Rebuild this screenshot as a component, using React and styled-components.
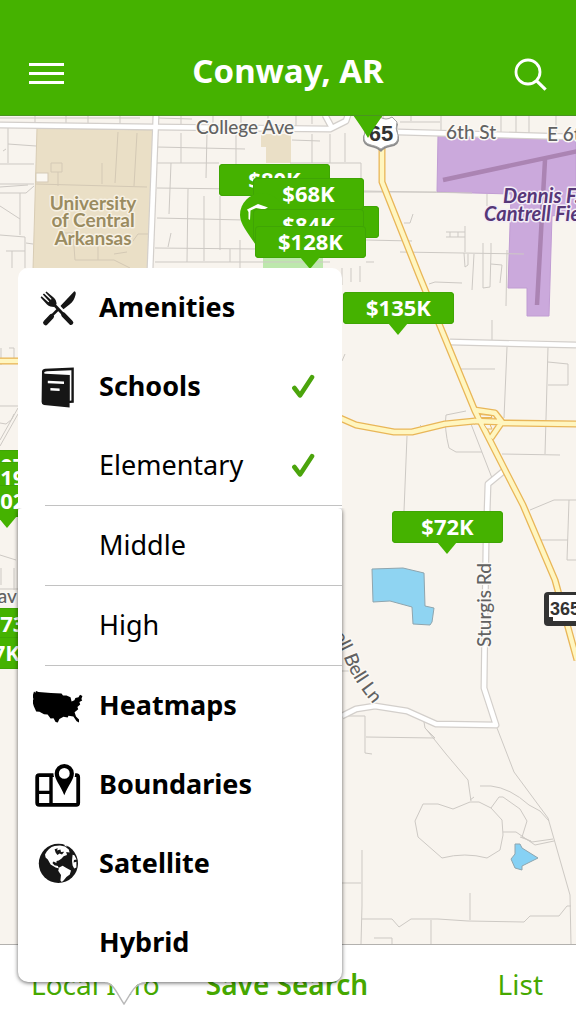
import React, { useState } from "react";
import styled, { createGlobalStyle, css } from "styled-components";

const GlobalStyle = createGlobalStyle`
  *, *::before, *::after { box-sizing: border-box; }
  body { margin: 0; background: #fff; font-family: "Noto Sans", "Open Sans", sans-serif; }
  button, input { font: inherit; }
`;

const green = "#45b200";

const Screen = styled.div`
  position: relative;
  display: flex;
  flex-direction: column;
  min-height: 100vh;
  overflow: hidden;
`;

const Header = styled.header`
  display: grid;
  grid-template-columns: 1fr auto 1fr;
  align-items: center;
  height: 116px;
  padding: 32px 29px 0;
  background: ${green};
  border-bottom: 1px solid #4a9420;
  color: #fff;
`;

const Title = styled.h1`
  margin: 0;
  padding-bottom: 6px;
  font-size: 33px;
  line-height: 40px;
  font-weight: 700;
`;

const IconButton = styled.button`
  display: flex;
  justify-self: ${(p) => p.$side};
  padding: 0;
  border: 0;
  background: none;
  color: inherit;
  cursor: pointer;
`;

const Bars = styled.span`
  display: grid;
  gap: 6px;
  width: 35px;
`;

const Bar = styled.span`
  height: 3px;
  background: #fff;
`;

const MapArea = styled.main`
  position: relative;
  flex: 1;
  min-height: 828px;
  overflow: hidden;
  background: #f8f4ee;
`;

const MapDrawing = styled.svg`
  display: block;
  position: absolute;
  inset: 0;
  width: 100%;
  height: 100%;
`;

const MapText = styled.text`
  font-family: Lato, sans-serif;
  font-size: ${(p) => p.$size || 19}px;
  font-weight: ${(p) => p.$weight || 500};
  font-style: ${(p) => (p.$italic ? "italic" : "normal")};
  fill: ${(p) => p.$color || "#626262"};
  stroke: ${(p) => p.$halo || "#fbf9f5"};
  stroke-width: 3px;
  stroke-linejoin: round;
  paint-order: stroke;
`;

const SignText = styled.text`
  font-family: "Liberation Sans Narrow", "Liberation Sans", sans-serif;
  font-size: ${(p) => p.$size}px;
  font-weight: 700;
  fill: #333;
`;

const PriceTag = styled.button`
  position: absolute;
  left: ${(p) => p.$x}px;
  top: ${(p) => p.$y}px;
  width: 111px;
  height: 32px;
  padding: 0 0 2px;
  border: 0;
  border-radius: 4px;
  background: ${green};
  box-shadow: inset 0 0 0 1px #3fa504;
  color: #fff;
  font-size: 22px;
  line-height: 30px;
  font-weight: 700;
  text-align: center;
  cursor: pointer;

  &::after {
    content: "";
    position: absolute;
    left: 45px;
    top: 31px;
    border: 10px solid transparent;
    border-top: 12px solid ${green};
    border-bottom: 0;
  }
`;

const PlacePin = styled.svg`
  position: absolute;
  left: ${(p) => p.$x}px;
  top: ${(p) => p.$y}px;
  width: 44px;
  height: 62px;
`;

const Toolbar = styled.footer`
  display: grid;
  grid-template-columns: 1fr auto 1fr;
  align-items: center;
  height: 80px;
  padding: 0 33px 2px 31px;
  border-top: 1px solid #b3b1ae;
  background: #fff;
`;

const ToolbarButton = styled.button`
  justify-self: ${(p) => p.$side};
  padding: 0;
  border: 0;
  background: none;
  color: #46a800;
  font-size: 28px;
  line-height: 40px;
  font-weight: ${(p) => (p.$strong ? 600 : 400)};
  cursor: pointer;
`;

const Popover = styled.section`
  position: absolute;
  left: 18px;
  bottom: 42px;
  width: 324px;
  isolation: isolate;
  border-radius: 10px;
  background: #fff;

  &::before {
    content: "";
    position: absolute;
    inset: 240px 0 0;
    z-index: -1;
    border-radius: 4px 4px 10px 10px;
    background: #fff;
    box-shadow: 0 1px 4px rgba(0, 0, 0, 0.6);
    clip-path: inset(0 -8px -8px);
  }
`;

const PopoverTail = styled.svg`
  position: absolute;
  left: 86px;
  top: 100%;
  width: 44px;
  height: 26px;
  margin-top: -2px;
`;

const Option = styled.label`
  display: grid;
  grid-template-columns: 81px 1fr 24px;
  align-items: center;
  min-height: 79px;
  padding-right: 27px;
  color: #000;
  font-size: 27px;
  line-height: 36px;
  font-weight: 700;
  cursor: pointer;

  ${(p) =>
    p.$sub &&
    css`
      grid-template-columns: 54px 1fr 24px;
      margin-left: 27px;
      border-bottom: 1px solid #c2c2c2;
      min-height: 80px;
      font-weight: 400;
    `}
`;

const OptionName = styled.span`
  padding-bottom: 2px;
`;

const IconCell = styled.span`
  display: flex;
  justify-content: center;
`;

const Tick = styled.span`
  display: grid;
  width: 24px;
  height: 26px;

  & > * { grid-area: 1 / 1; }
`;

const TickInput = styled.input`
  appearance: none;
  width: 24px;
  height: 26px;
  margin: 0;
  cursor: pointer;
`;

function OptionIcon({ children }) {
  return (
    <svg width="51" height="51" viewBox="0 0 51 51" fill="#161616" aria-hidden="true">
      {children}
    </svg>
  );
}

const AmenitiesIcon = () => (
  <OptionIcon>
    <path d="M41.3 9.2C43 9.5 43 11.5 42.5 13C41.5 17 40 20 36.5 22.5L28.5 28.8L25.5 26Z" />
    <path d="M25 27.5L12.8 39.6" stroke="#161616" strokeWidth="2.6" />
    <path d="M18.5 34.5L12.6 40.8" stroke="#161616" strokeWidth="5" strokeLinecap="round" />
    <path d="M18 17L40 41" stroke="#fff" strokeWidth="4.6" />
    <path d="M7.6 15.4L14 22.6C16 24.6 18.8 24.8 20.6 25L23.6 22C23.4 19.8 22.8 17.4 20.6 15.6L13.4 9.4L12.5 10.4L18.6 17L17.8 17.8L11 11.4L9.8 12.6L16.2 19.4L15.4 20.2L8.6 14.2Z" />
    <path d="M21 22.5L37.6 40.2" stroke="#161616" strokeWidth="3" />
    <path d="M30.5 32.8L38 40.6" stroke="#161616" strokeWidth="4.6" strokeLinecap="round" />
  </OptionIcon>
);

const SchoolsIcon = () => (
  <OptionIcon>
    <path d="M9 10Q9.4 8 12 7.8L40.8 6.6V41.8L36.6 42V46.5L11 44Q8.6 43.6 8.6 41Z" />
    <path d="M11 11.8Q11.5 10.4 14 10.3L38.4 9.2V39.6L36.8 39.8V14L12.6 12.8Q11 12.6 11 11.8Z" fill="#fff" />
    <path d="M14.8 19.8L31 20.4V23L14.8 22.3ZM17.4 27L26.6 27.5V30L17.4 29.4Z" fill="#fff" />
  </OptionIcon>
);

const HeatmapsIcon = () => (
  <OptionIcon>
    <path
      fill="#000"
      d="M1 11.6L2.4 12.8L3 11L5.5 12L18 13L28.5 13.6L30 15.4L33.5 15.6L37.5 17.2L38.6 21.6L41.4 20.2L42.4 18L45.5 17.2L47 14.8L49.4 16L48.4 19L49.2 20.4L46.4 22L47.2 24.4L44.4 27L45.2 29.2L41.6 32.2L43 36.4L46 39.4V42.6L43.6 41.2L40.4 36.4L35.5 35.8L34.6 37.4L30.5 36.8L26.4 39L24.8 42.6L22.6 42L20.5 38.2L17.6 38.4L14.6 34.4L11 34.2L6.5 31.8L3.2 31.4L.8 26.2L-.4 22L.4 19L-.4 16Z"
    />
  </OptionIcon>
);

const BoundariesIcon = () => (
  <OptionIcon>
    <rect x="4.2" y="16.2" width="41" height="29.6" rx="2" fill="none" stroke="#000" strokeWidth="3.8" />
    <path d="M18 16V46M4 33.4H18" stroke="#000" strokeWidth="3.4" />
    <path d="M31.3 3.4A11 11 0 0 0 20.4 14.6C20.6 21 26 27 31.3 37.5C36.6 27 42 21 42.2 14.6A11 11 0 0 0 31.3 3.4Z" fill="#fff" />
    <path
      fill="#000"
      fillRule="evenodd"
      d="M31.3 5A9.6 9.6 0 0 0 21.7 14.6C21.7 20.5 27 26 31.3 36.2C35.6 26 40.9 20.5 40.9 14.6A9.6 9.6 0 0 0 31.3 5ZM31.3 9A5.4 5.4 0 1 1 31.3 19.8A5.4 5.4 0 1 1 31.3 9Z"
    />
  </OptionIcon>
);

const SatelliteIcon = () => (
  <OptionIcon>
    <circle cx="25.4" cy="25.4" r="19.6" />
    <g fill="#fff">
      <path d="M12 16.5C14 12 17.5 9 21.6 8L27 7.4L32 8.6L35.8 11.4L36.6 14.4L33.2 14L34 17L30.6 18.2L28.6 20.6L25.8 22.4L23.6 23L23.4 25L20.6 23.4L19.4 25L21.4 27.2L24.8 28L26 30.4L22.6 29.4L17.6 26.6L14.8 21.6L12.6 19.6Z" />
      <path d="M26.2 29.6L29.6 27.8L33.4 30L38 32.4L36.8 36.4L33.4 39L30.6 42.4L28.8 44L27.4 42.4L28 37L25.2 32.8Z" />
      <path d="M39.6 16.8L41.4 17.2L43.6 21.4L41 22L40.6 24.4L43.4 23.8L43.4 29.4L41.2 30.4L39.6 27.4L39 23Z" />
      <path d="M30.6 6.6L33 6.9L34.6 8.4L32.6 8.2Z" />
    </g>
    <path d="M21.6 11.2L24.8 10.2L24 12.4L27.4 11.6L28 14L31.2 13.8L29 16.4L26.6 15.4L24.4 17L22.6 14.6Z" />
  </OptionIcon>
);

const CheckMark = () => (
  <svg width="24" height="26" viewBox="0 0 24 26" pointerEvents="none" aria-hidden="true">
    <path d="M3.4 14L9 21.4L21 3.2" fill="none" stroke="#4ba40c" strokeWidth="4.6" strokeLinecap="round" strokeLinejoin="round" />
  </svg>
);

const options = [
  { id: "amenities", label: "Amenities", Icon: AmenitiesIcon },
  { id: "schools", label: "Schools", Icon: SchoolsIcon },
  { id: "elementary", label: "Elementary", sub: true },
  { id: "middle", label: "Middle", sub: true },
  { id: "high", label: "High", sub: true },
  { id: "heatmaps", label: "Heatmaps", Icon: HeatmapsIcon },
  { id: "boundaries", label: "Boundaries", Icon: BoundariesIcon },
  { id: "satellite", label: "Satellite", Icon: SatelliteIcon },
  { id: "hybrid", label: "Hybrid" },
];

function LayerMenu() {
  const [on, setOn] = useState({ schools: true, elementary: true });
  return (
    <Popover aria-label="Map layers">
      {options.map(({ id, label, sub, Icon }) => (
        <Option key={id} $sub={sub} htmlFor={id}>
          <IconCell>{Icon && <Icon />}</IconCell>
          <OptionName>{label}</OptionName>
          <Tick>
            <TickInput id={id} type="checkbox" checked={!!on[id]} onChange={() => setOn({ ...on, [id]: !on[id] })} />
            {on[id] && <CheckMark />}
          </Tick>
        </Option>
      ))}
      <PopoverTail viewBox="0 0 44 26" aria-hidden="true">
        <path d="M1 2C10 2 13 14 20 24C27 14 30 2 42 2V0H1Z" fill="#fff" />
        <path d="M1 3C10 3 13 14 20 24C27 14 30 3 42 3" fill="none" stroke="#b9b9b9" strokeWidth="1.4" />
      </PopoverTail>
    </Popover>
  );
}

const localStreets = [
  "M0 118H140M35 115V123M66 115V124M88 115V125M120 115V125M8 128V163M0 164H34M8 144L36 146M3 151L6 149M0 184H34M0 187L28 185",
  "M0 193H26L34 186M0 206L20 219M20 193V235M0 235L25 237M25 237V268M6 251H25M12 251V268M26 243L33 244",
  "M157 118L192 119M181 115V128M213 115V125M241 115V124M268 115V124M296 115V127M312 115V124M157 147L245 149M181 133V163M207 133L206 178M157 163H219M236 133V164",
  "M171 163L169 214M157 188L240 189M188 189L187 262M204 196V261M157 218L244 220M220 196V250M155 248L260 249M171 233L168 247M155 262H330M230 249V262M240 240V268M290 163H361V178M292 140L320 141M312 134V163M330 134V163M345 133V162",
  "M361 192H436M364 191L472 193M342 268V285M351 268V282M360 266V282M366 262H374M366 240L412 241M384 130L383 115M400 122H440M411 115V121M441 115V131M501 115V133M516 115V132M529 115V133M556 115V135",
  "M404 223H410L413 214M446 232H465M446 237H465M450 232V237M458 232V237M465 226V252M400 252L524 254M487 194V206M464 253L465 267L468 265V254M474 254L472 290M483 243V288L490 287L491 252V243M491 264L502 265L500 283M507 250L506 306M429 284L435 282L462 283",
  "M492 320V340M461 369H495M507 347L504 418M548 347L545 454M548 362L568 364V385H548M502 454L560 455M345 354L342 361M446 415L466 411M446 415Q444 428 449 448L456 452H482M471 424L492 478M407 436L404 511M530 510L554 500H576M569 500L567 560H576M540 540H568M420 425L422 427",
  "M1 348V365M9 348H14V358M0 406H18M14 414Q13 420 6 424L0 423M0 440L18 408M0 446L18 414M0 555L16 560M14 568V590M1 568V585M0 589H18",
  "M342 716H365V753L372 754M366 737L435 738L425 728L424 722M426 729L446 754L468 780L471 801M497 728L514 772L548 818L570 895L571 944M342 671H350",
  "M423 804H438L453 809L470 802H479L491 808L502 820L503 835L500 850L487 858Q465 852 442 858L418 837L415 821L423 804M470 800L474 797M491 808L499 797H503L520 809L527 821L522 837L532 842L553 839M503 832H516L535 845L554 841",
  "M480 786H491Q510 788 529 805L540 811L549 821M520 837L531 841",
  "M362 850V905L361 944M342 883H361M362 919H392L399 927L411 919H438L468 921L524 922L530 916H559L567 906H571M431 920V944M470 893V920M374 938H392V944",
];

const whiteRoads = [
  "M0 125L155 127L330 129L346 121L348 115",
  "M325 115L332 128",
  "M156 115L150 270",
  "M398 132L576 137",
  "M450 342L576 345",
  "M505 470L488 484L486 545L484 688L496 725L436 724L407 711L375 706L356 709L342 716",
];

const yellowRoads = [
  "M382 145V182L419 275L475 411L505 470L523 505L555 580L577 660",
  "M-2 361H22",
  "M340 418L356 425L394 432H412L445 424L475 421",
  "M475 410L495 413L502 422L491 438M474 421L502 422M501 423L578 424",
];

function Roads({ roads, casing, fill, outer, inner }) {
  return (
    <g fill="none" strokeLinejoin="round">
      {roads.map((d) => <path key={`c${d}`} d={d} stroke={casing} strokeWidth={outer} />)}
      {roads.map((d) => <path key={`f${d}`} d={d} stroke={fill} strokeWidth={inner} />)}
    </g>
  );
}

function CityMap() {
  return (
    <MapDrawing viewBox="0 116 576 828" preserveAspectRatio="xMinYMin slice" role="img" aria-label="Map of Conway, Arkansas">
      <path d="M37 128L154 130L148 270H33Z" fill="#eadfc6" stroke="#d8ccb4" />
      <path d="M261 134H291V163H266V147H261Z" fill="#eadfc6" />
      <rect x="263" y="255" width="60" height="14" fill="#bde8ac" />
      <path d="M438 135L576 139V212L552 216L549 316H527V288H508L511 194L437 192Z" fill="#cba9dc" stroke="#c09cd3" />
      <path d="M443 180L578 151M545 160L537 305" fill="none" stroke="#ab84b3" strokeWidth="4.5" />
      <path d="M51 163H62V172H51ZM58 172V186M102 163V184M118 132L115 183M137 133L134 186M36 184L147 187M64 233H73L75 260H114L130 268M98 238V260M130 245L138 234H148M114 254L127 252" fill="none" stroke="#d4c9b5" />
      <rect x="36" y="173" width="12" height="9" fill="#fbf8f2" stroke="#d4c9b5" />
      <g fill="none" stroke="#cdc9c4">
        {localStreets.map((d) => <path key={d} d={d} />)}
      </g>
      <Roads roads={whiteRoads} casing="#d3cfcb" fill="#fff" outer={7} inner={4.6} />
      <Roads roads={yellowRoads} casing="#e9b658" fill="#fff6c0" outer={7} inner={4.4} />
      <path d="M480 414.5L491 415.5L492 417.5H481ZM484 424.5H490L492 429H487Z" fill="#f8f4ee" stroke="#e9b658" />

      <path d="M372 569L403 568L424 573L425 606L434 608L432 622L430 625L413 624L412 607L390 601L373 602Z" fill="#8fd4f2" stroke="#8fa5ae" />
      <path d="M515 844H520L522 848L538 858L522 866V870L515 868L511 859L515 854Z" fill="#86d1f4" stroke="#8fa5ae" />

      <MapText x="245" y="134" textAnchor="middle">College Ave</MapText>
      <MapText x="446" y="139">6th St</MapText>
      <MapText x="547" y="141">E 6th St</MapText>
      <MapText x="17" y="603" textAnchor="end">Dav</MapText>
      <MapText transform="translate(491 605) rotate(-90)" textAnchor="middle">Sturgis Rd</MapText>
      <path id="bell-lane" d="M325 619L345 660Q353 682 380 712" fill="none" />
      <MapText><textPath href="#bell-lane" startOffset="18">ell Bell Ln</textPath></MapText>
      <g textAnchor="middle">
        <MapText x="93" y="210" $weight={700} $color="#9a8b60" $halo="#f7f1e4">University</MapText>
        <MapText x="93" y="227" $weight={700} $color="#9a8b60" $halo="#f7f1e4">of Central</MapText>
        <MapText x="93" y="245" $weight={700} $color="#9a8b60" $halo="#f7f1e4">Arkansas</MapText>
      </g>
      <MapText x="503" y="203" $size={20} $weight={700} $italic $color="#563778" $halo="#f4edf6">Dennis F.</MapText>
      <MapText x="484" y="221" $size={20} $weight={700} $italic $color="#563778" $halo="#f4edf6">Cantrell Field</MapText>

      <path d="M370 121Q375 123 380 119Q386 123 392 118L398 124Q396 130 399 137Q400 146 390 147Q384 148 381 152Q377 148 371 147Q362 145 363 137Q366 130 364 126Z" fill="#8b8b8b" />
      <path d="M370 119Q375 121 380 117Q386 121 392 117L397 122Q395 129 398 135Q399 144 390 145Q384 146 381 149Q377 146 371 145Q363 143 364 136Q367 128 365 124Z" fill="#fff" stroke="#a3a3a3" />
      <SignText x="381" y="141" textAnchor="middle" $size={22}>65</SignText>
      <rect x="544" y="592" width="50" height="34" rx="4" fill="#333" />
      <path d="M549 595H580V621H553V617H549Z" fill="#fff" />
      <SignText x="550" y="615" $size={18}>365</SignText>
    </MapDrawing>
  );
}

const tags = [
  { x: 253, y: 93, label: "$84K" },
  { x: 255, y: 110, label: "$128K" },
  { x: 343, y: 176, label: "$135K" },
  { x: 392, y: 395, label: "$72K" },
  { x: -48, y: 334, label: "$107K" },
  { x: -48, y: 346, label: "$119K" },
  { x: -48, y: 369, label: "$102K" },
  { x: -48, y: 492, label: "$173K" },
  { x: -68, y: 521, label: "$117K" },
];

const pinShape = "M22 0A22 22 0 0 0 0 22C0 33 12 44 22 62C32 44 44 33 44 22A22 22 0 0 0 22 0Z";

export default function App() {
  return (
    <Screen>
      <GlobalStyle />
      <Header>
        <IconButton $side="start" aria-label="Menu">
          <Bars><Bar /><Bar /><Bar /></Bars>
        </IconButton>
        <Title>Conway, AR</Title>
        <IconButton $side="end" aria-label="Search">
          <svg width="34" height="34" viewBox="0 0 34 34" fill="none" stroke="#fff" strokeWidth="2.8" aria-hidden="true">
            <circle cx="15" cy="15" r="12" />
            <path d="M23.4 23.6L32.6 32.6" strokeWidth="3.2" />
          </svg>
        </IconButton>
      </Header>
      <MapArea>
        <CityMap />
        <PriceTag $x={219} $y={48}>$80K</PriceTag>
        <PriceTag $x={268} $y={90} aria-label="Listing" />
        <PriceTag $x={253} $y={62}>$68K</PriceTag>
        <PlacePin $x={240} $y={77} viewBox="0 0 44 62" aria-hidden="true">
          <path d={pinShape} fill={green} />
          <path d="M7 16.5L18 11L28 14.5L24 16.5L16 15L10.5 17.5L10 27L8.5 26V19Z" fill="#fff" />
        </PlacePin>
        <PlacePin $x={346} $y={-40} viewBox="0 0 44 62" aria-hidden="true">
          <path d={pinShape} fill={green} />
        </PlacePin>
        {tags.map((t) => (
          <PriceTag key={t.label} $x={t.x} $y={t.y}>{t.label}</PriceTag>
        ))}
      </MapArea>
      <Toolbar>
        <ToolbarButton $side="start">Local Info</ToolbarButton>
        <ToolbarButton $side="center" $strong>Save Search</ToolbarButton>
        <ToolbarButton $side="end">List</ToolbarButton>
      </Toolbar>
      <LayerMenu />
    </Screen>
  );
}
